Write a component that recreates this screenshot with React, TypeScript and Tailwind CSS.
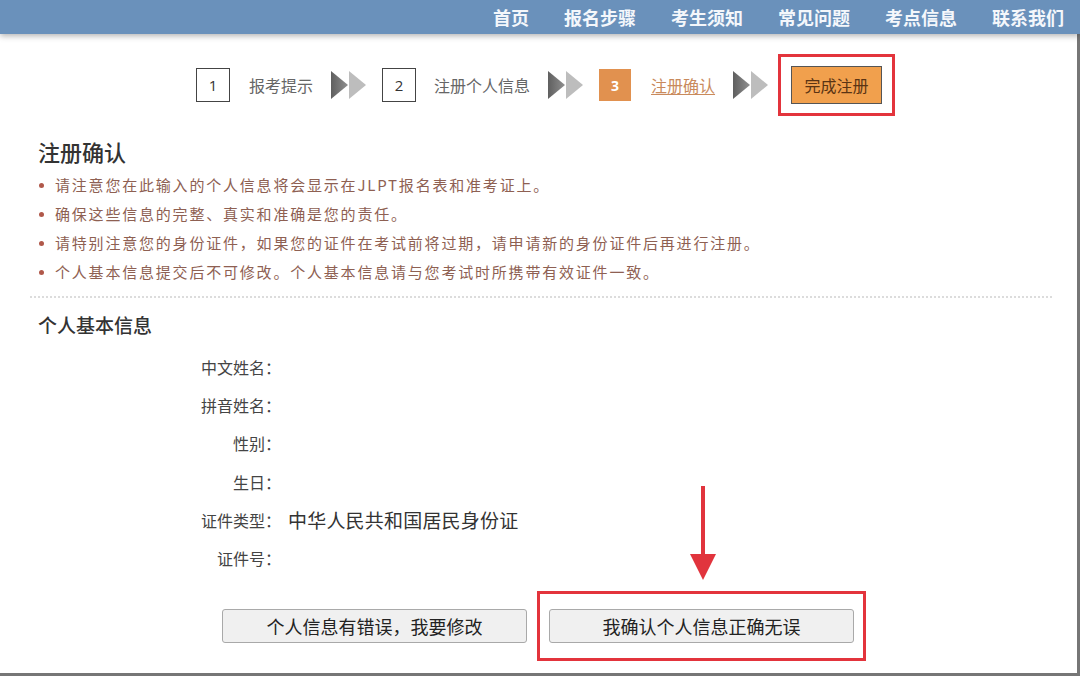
// App: 报名注册确认页

import React from 'react';

const FONT = '"Noto Sans CJK SC", "Noto Sans", sans-serif';

const navItems = ['首页', '报名步骤', '考生须知', '常见问题', '考点信息', '联系我们'];

const notices = [
    '请注意您在此输入的个人信息将会显示在JLPT报名表和准考证上。',
    '确保这些信息的完整、真实和准确是您的责任。',
    '请特别注意您的身份证件，如果您的证件在考试前将过期，请申请新的身份证件后再进行注册。',
    '个人基本信息提交后不可修改。个人基本信息请与您考试时所携带有效证件一致。',
];

const fields: { label: string; value?: string }[] = [
    { label: '中文姓名：' },
    { label: '拼音姓名：' },
    { label: '性别：' },
    { label: '生日：' },
    { label: '证件类型：', value: '中华人民共和国居民身份证' },
    { label: '证件号：' },
];

const StepArrows: React.FC = () => (
    <svg width="36" height="28" viewBox="0 0 36 28" className="shrink-0">
        <defs>
            <linearGradient id="darkArrow" x1="0" x2="1" y1="0" y2="0">
                <stop offset="0" stopColor="#5f5f5f" />
                <stop offset="1" stopColor="#8f8f8f" />
            </linearGradient>
        </defs>
        <polygon points="0,0 17,14 0,28" fill="url(#darkArrow)" />
        <polygon points="18,0 35,14 18,28" fill="#bdbdbd" />
    </svg>
);

const StepBox: React.FC<{ n: number }> = ({ n }) => (
    <div className="w-[34px] h-[34px] border border-[#444] flex items-center justify-center text-[15px] text-[#333] font-['Open_Sans'] shrink-0">
        {n}
    </div>
);

export default function App() {
    return (
        <div
            className="relative w-[1080px] h-[676px] bg-white flex flex-col overflow-hidden"
            style={{ fontFamily: FONT }}
        >
            {/* 顶部导航 */}
            <div className="relative z-10 h-[34px] bg-[#6a91bb] shadow-[0_2px_6px_rgba(0,0,0,0.3)] flex items-center justify-end gap-[35px] pr-[16px] shrink-0">
                {navItems.map((item) => (
                    <span key={item} className="text-[18px] font-bold text-[#f4f7fb] leading-none">
                        {item}
                    </span>
                ))}
            </div>

            <div className="flex-1 flex flex-col border-r-[3px] border-b-[3px] border-[#767676] pl-[30px] pr-[25px]">
                {/* 步骤条 */}
                <div className="mt-[20px] flex items-center pl-[166px]">
                    <StepBox n={1} />
                    <span className="ml-[19px] text-[16px] text-[#666]">报考提示</span>
                    <div className="ml-[18px]"><StepArrows /></div>
                    <div className="ml-[15px]"><StepBox n={2} /></div>
                    <span className="ml-[18px] text-[16px] text-[#666]">注册个人信息</span>
                    <div className="ml-[18px]"><StepArrows /></div>
                    <div className="ml-[15px] w-[32px] h-[32px] bg-[#e1914f] flex items-center justify-center text-[14px] font-bold text-white font-['Open_Sans']">
                        3
                    </div>
                    <span className="ml-[20px] text-[16px] text-[#c98a5c] underline underline-offset-2">注册确认</span>
                    <div className="ml-[18px]"><StepArrows /></div>
                    <div className="ml-[9px] border-[3px] border-[#e3343c] px-[10px] py-[9px]">
                        <div className="w-[91px] h-[38px] bg-[#f1a04d] border border-[#555] flex items-center justify-center text-[16px] text-[#5a3414]">
                            完成注册
                        </div>
                    </div>
                </div>

                {/* 注册确认说明 */}
                <h2 className="mt-[20px] ml-[8px] text-[22px] leading-[30px] text-[#333] font-medium">注册确认</h2>
                <ul className="mt-[5px] ml-[9px]">
                    {notices.map((text) => (
                        <li key={text} className="flex items-center h-[29px]">
                            <span className="w-[5px] h-[5px] rounded-full bg-[#b0584a] shrink-0" />
                            <span className="ml-[11px] text-[15px] tracking-[1.8px] text-[#8e6052]">{text}</span>
                        </li>
                    ))}
                </ul>

                <div className="mt-[9px] border-t-2 border-dotted border-[#dcdcdc]" />

                {/* 个人基本信息 */}
                <h2 className="mt-[14px] ml-[8px] text-[19px] leading-[26px] text-[#333] font-medium">个人基本信息</h2>
                <div className="mt-[10px] flex flex-col">
                    {fields.map((f) => (
                        <div key={f.label} className="flex items-center h-[38.2px]">
                            <span className="w-[251px] text-right text-[16px] text-[#444]">{f.label}</span>
                            {f.value && (
                                <span className="ml-[7px] text-[19px] tracking-[0.2px] text-[#333]">{f.value}</span>
                            )}
                        </div>
                    ))}
                </div>

                {/* 操作按钮 */}
                <div className="mt-[14px] ml-[192px] flex items-center">
                    <button className="w-[305px] h-[34px] bg-[#f0f0f0] border border-[#a9a9a9] rounded-[3px] text-[18px] text-[#222]">
                        个人信息有错误，我要修改
                    </button>
                    <div className="ml-[10px] border-[3px] border-[#e3343c] px-[9px] py-[15px]">
                        <button className="w-[305px] h-[34px] bg-[#f0f0f0] border border-[#a9a9a9] rounded-[3px] text-[18px] text-[#222]">
                            我确认个人信息正确无误
                        </button>
                    </div>
                </div>
            </div>

            {/* 标注箭头 */}
            <svg
                className="absolute left-[689px] top-[486px]"
                width="28"
                height="96"
                viewBox="0 0 28 96"
            >
                <rect x="12" y="0" width="4" height="72" fill="#e1343d" />
                <polygon points="1,68 27,68 14,94" fill="#e1343d" />
            </svg>
        </div>
    );
}
